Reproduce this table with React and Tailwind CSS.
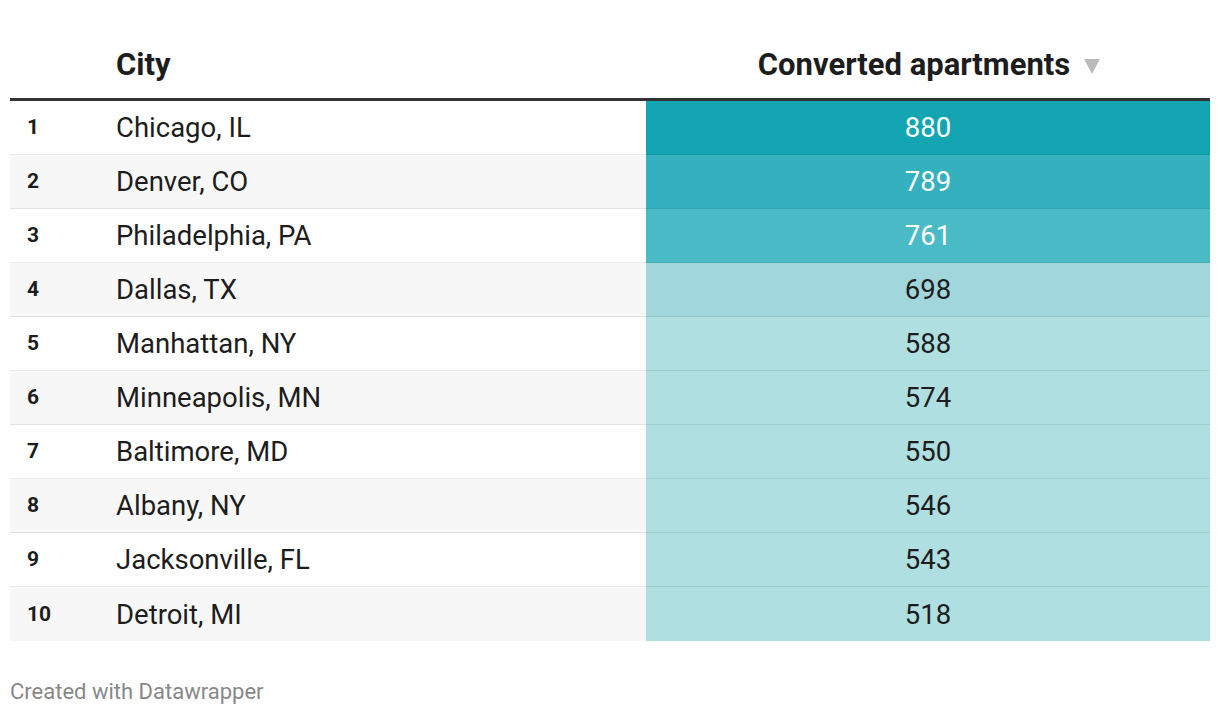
const rows = [
  { rank: 1, city: "Chicago, IL", value: 880, bg: "bg-[#14a5b3]", text: "text-white" },
  { rank: 2, city: "Denver, CO", value: 789, bg: "bg-[#35b0be]", text: "text-white" },
  { rank: 3, city: "Philadelphia, PA", value: 761, bg: "bg-[#4bbac7]", text: "text-white" },
  { rank: 4, city: "Dallas, TX", value: 698, bg: "bg-[#a1d6dc]", text: "text-[#1d1d1d]" },
  { rank: 5, city: "Manhattan, NY", value: 588, bg: "bg-[#b0dfe1]", text: "text-[#1d1d1d]" },
  { rank: 6, city: "Minneapolis, MN", value: 574, bg: "bg-[#b0dfe1]", text: "text-[#1d1d1d]" },
  { rank: 7, city: "Baltimore, MD", value: 550, bg: "bg-[#b0dfe1]", text: "text-[#1d1d1d]" },
  { rank: 8, city: "Albany, NY", value: 546, bg: "bg-[#b0dfe1]", text: "text-[#1d1d1d]" },
  { rank: 9, city: "Jacksonville, FL", value: 543, bg: "bg-[#b0dfe1]", text: "text-[#1d1d1d]" },
  { rank: 10, city: "Detroit, MI", value: 518, bg: "bg-[#b0dfe1]", text: "text-[#1d1d1d]" },
];

export default function App() {
  return (
    <div className="w-[1220px] h-[716px] bg-white px-[10px] font-['Roboto',sans-serif] text-[#1d1d1d]">
      <div className="flex h-[101px] items-end pb-[15px] text-[31px] font-bold leading-[36px] border-b-[3px] border-[#333333]">
        <div className="w-[96px]"></div>
        <div className="w-[540px] pl-[10px]">City</div>
        <div className="flex-1 flex items-center justify-center pl-[2px]">
          <span>Converted apartments</span>
          <svg className="ml-[14px] mt-[3px]" width="16" height="15" viewBox="0 0 16 15">
            <path d="M0 0 H16 L8 15 Z" fill="#bbbbbb" />
          </svg>
        </div>
      </div>
      {rows.map((r, i) => {
        const last = i === rows.length - 1;
        const sep = last ? "" : "border-b border-[rgba(0,0,0,0.08)]";
        return (
          <div
            key={r.rank}
            className={`flex h-[54px] ${i % 2 === 1 ? "bg-[#f7f7f7]" : "bg-white"}`}
          >
            <div className={`w-[96px] pl-[17px] pt-[1px] flex items-center text-[21px] font-bold ${sep}`}>{r.rank}</div>
            <div className={`w-[540px] pl-[10px] pt-[1px] flex items-center text-[27.5px] ${sep}`}>{r.city}</div>
            <div className={`flex-1 pt-[1px] flex items-center justify-center text-[27.5px] ${r.bg} ${r.text} ${sep}`}>
              {r.value}
            </div>
          </div>
        );
      })}
      <div className="mt-[36px] text-[22px] leading-[30px] text-[#888888]">Created with Datawrapper</div>
    </div>
  );
}
